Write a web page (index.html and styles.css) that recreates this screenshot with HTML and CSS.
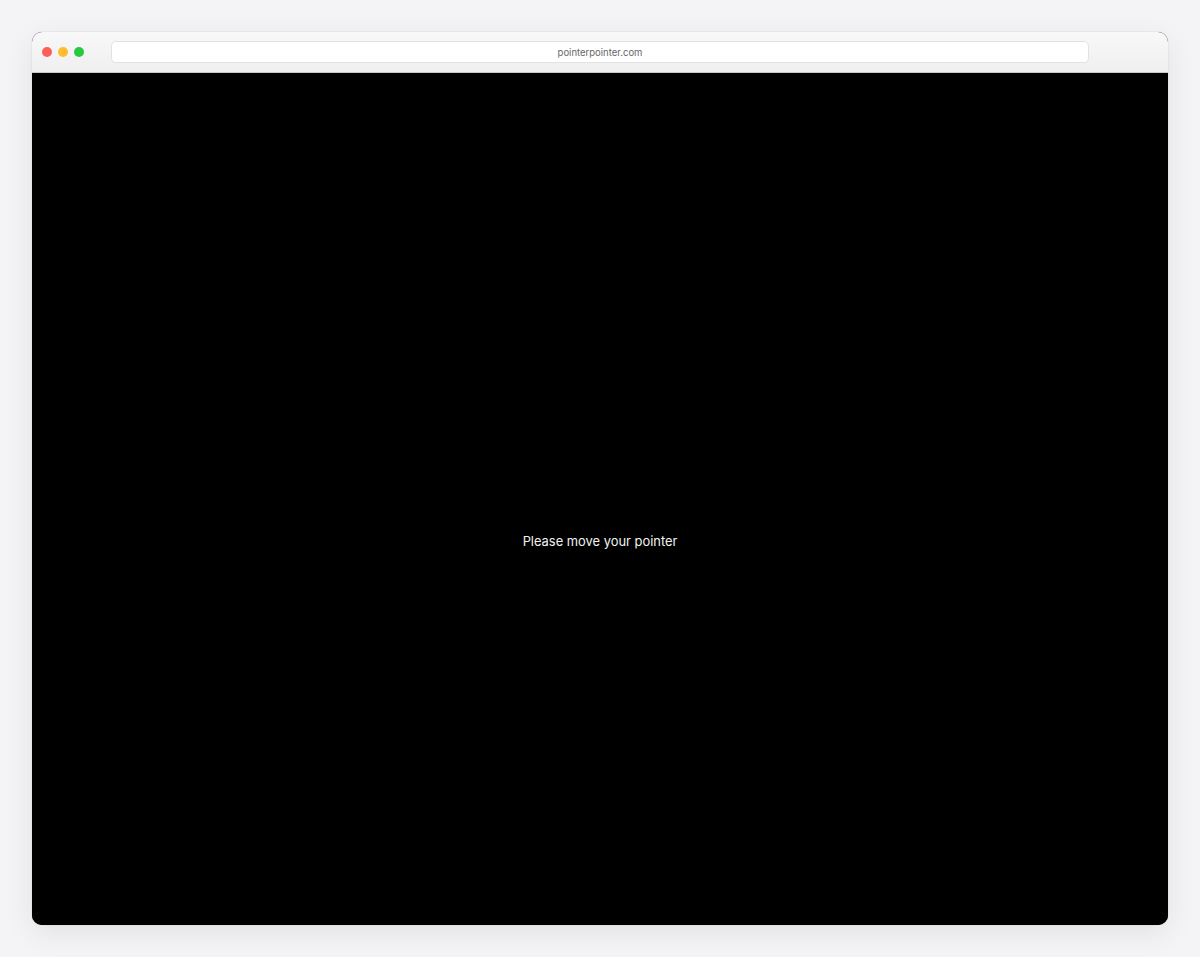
FILE: index.html
```html
<!DOCTYPE html>
<html>
<head>
<meta charset="utf-8">
<link rel="stylesheet" href="styles.css">
</head>
<body>
<div class="stage">
  <div class="window">
    <div class="titlebar">
      <div class="dots">
        <span class="dot red"></span>
        <span class="dot yellow"></span>
        <span class="dot green"></span>
      </div>
      <div class="address">pointerpointer.com</div>
    </div>
    <div class="content">
      <p class="message">Please move your pointer</p>
    </div>
  </div>
</div>
</body>
</html>
```

FILE: styles.css
```css
html, body {
  margin: 0;
  padding: 0;
  height: 100%;
}
body {
  background: #f4f4f6;
  font-family: Inter, "Liberation Sans", sans-serif;
}
.stage {
  padding: 32px;
  height: 957px;
  box-sizing: border-box;
}
.window {
  width: 1136px;
  height: 893px;
  border-radius: 10px;
  overflow: hidden;
  display: flex;
  flex-direction: column;
  box-shadow: 0 8px 30px rgba(0, 0, 0, 0.08), 0 0 0 1px rgba(0, 0, 0, 0.03);
  background: #000;
}
.titlebar {
  height: 41px;
  flex: none;
  background: linear-gradient(#f8f8f8, #efefef);
  border-bottom: 1px solid #c9c9c9;
  display: flex;
  align-items: center;
  padding: 0 0 0 10px;
  box-sizing: border-box;
}
.dots {
  display: flex;
  gap: 6px;
  width: 69px;
  flex: none;
}
.dot {
  width: 10px;
  height: 10px;
  border-radius: 50%;
  display: block;
}
.red { background: #fe5f57; }
.yellow { background: #febc2e; }
.green { background: #28c840; }
.address {
  width: 978px;
  height: 22px;
  flex: none;
  background: #fff;
  border: 1px solid #e2e2e2;
  border-radius: 5px;
  box-sizing: border-box;
  display: flex;
  align-items: center;
  justify-content: center;
  font-size: 9.5px;
  color: #666;
}
.content {
  flex: 1;
  background: #000;
  display: flex;
  align-items: center;
  justify-content: center;
  padding-top: 84px;
}
.message {
  margin: 0;
  color: #f2f2f2;
  font-size: 12.9px;
}
```
